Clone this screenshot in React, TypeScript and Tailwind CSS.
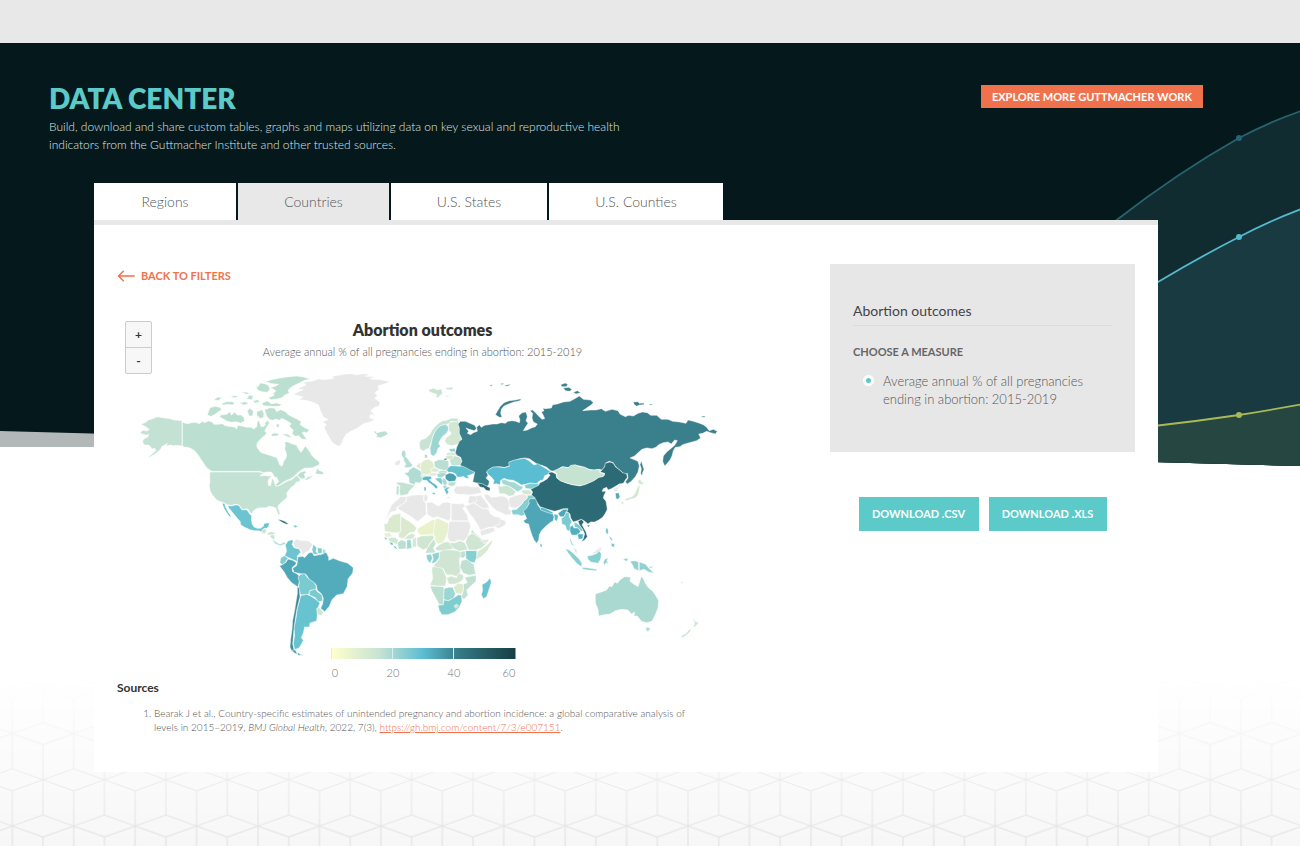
import React from "react";

type Shape = [fill: string, d: string];
type Region = { name: string; x: number; y: number; shapes: Shape[] };

const GREY = "#e8e8e8";
const CANADA = "#bbe0d1";
const RUSSIA = "#3a7f8c";
const CHINA = "#2c6b75";

const regions: Region[] = [
  {
    name: "north-america",
    x: 130,
    y: 365,
    shapes: [
      [CANADA, "M157,170 L163,174 173,176 185,173 196,172 208,176 219,168 222,173 236,168 246,171 252,178 264,178 278,176 283,181 294,184 305,185 316,187 319,193 324,181 338,184 350,187 364,187 370,192 380,186 382,170 386,166 390,176 394,186 402,184 410,172 413,182 408,190 404,198 410,204 404,212 398,216 390,224 382,233 380,244 386,254 392,262 404,266 416,270 428,274 440,278 444,286 448,298 454,304 459,300 460,290 466,282 470,272 468,262 464,252 466,242 464,232 472,230 480,234 490,238 500,240 503,248 508,256 513,262 518,256 522,248 527,243 533,252 540,262 546,272 554,280 562,286 568,292 568,299 558,304 548,308 536,309 522,310 510,318 500,326 492,334 500,332 512,322 524,318 530,322 522,328 527,338 518,342 508,338 502,330 490,336 480,342 470,346 460,352 448,360 440,364 436,358 438,344 434,336 428,326 420,322 412,322 402,324 394,320 384,319 246,319 240,316 234,311 228,305 224,300 218,290 212,282 206,272 200,264 192,256 182,250 172,247 163,246 157,243Z"],
      ["#c4e2d3", "M156,168 L146,166 132,165 120,161 108,160 98,158 86,156 78,157 66,162 56,164 50,170 42,174 34,178 44,184 52,188 58,194 50,198 40,196 30,202 36,207 48,210 56,208 54,216 44,220 38,228 40,236 46,240 56,240 62,246 66,252 74,250 78,256 70,264 60,272 52,280 64,274 74,268 84,260 92,252 96,244 104,240 112,235 108,244 120,240 130,242 142,241 156,243Z"],
      ["#c4e2d3", "M240,321 L384,321 394,322 402,326 396,330 390,333 400,332 410,329 418,331 424,336 416,342 414,352 416,362 422,362 424,350 426,342 434,342 438,346 434,354 436,362 442,364 452,360 462,354 474,347 486,344 496,334 502,332 508,340 512,346 506,350 498,352 494,360 484,366 480,372 474,378 470,386 472,396 464,404 454,412 446,420 444,428 448,438 450,448 446,450 442,442 438,430 430,426 418,424 408,428 398,428 386,429 376,433 368,440 367,448 360,442 354,432 346,432 338,434 328,420 316,418 304,421 292,419 280,413 272,410 262,406 254,398 246,388 240,376 238,362 240,350 239,336Z"],
      ["#6bc4cf", "M293,422 L305,423 316,420 326,421 336,435 346,434 352,436 358,446 365,452 364,464 366,476 372,486 382,490 392,490 400,484 402,476 410,474 418,474 416,484 410,490 402,490 400,496 394,500 386,497 374,497 360,494 344,487 332,479 331,470 322,460 314,450 304,438 296,428Z M276,414 L284,416 286,424 290,432 294,440 302,452 303,457 296,452 288,440 282,430Z"],
      ["#c9e4d2", "M396,494 L406,490 410,498 404,506 396,504Z M412,503 L424,500 436,503 432,509 420,510 412,508Z M418,512 L432,508 435,520 430,524Z"],
      ["#7fcdd1", "M427,524 L436,528 442,535 436,534Z M488,482 L498,480 503,485 496,488Z"],
      [CHINA, "M443,463 L454,465 464,469 476,477 470,478 460,474 450,468Z"],
      [CANADA, "M240,128 L256,124 272,128 274,136 262,142 256,148 242,154 232,150 236,138Z M274,150 L290,148 300,140 304,150 314,142 322,150 334,150 342,158 344,168 332,174 318,170 304,172 290,168 284,164 276,160 268,154Z M274,116 L290,110 306,110 314,114 308,120 294,118 280,120Z M250,106 L264,96 276,98 266,106Z M300,96 L312,92 326,94 316,98Z M334,80 L350,82 360,86 348,88Z M350,102 L358,90 370,94 366,104Z M328,114 L346,110 356,116 342,120Z"],
      [CANADA, "M378,60 L384,66 390,54 404,56 414,60 420,72 412,82 396,80 382,74Z M406,50 L424,44 446,40 470,36 500,33 520,36 540,42 524,46 512,52 500,58 484,66 474,76 478,84 464,90 456,98 440,102 424,104 414,98 432,92 430,84 438,78 430,72 420,68 436,64 446,58 426,56Z M396,114 L412,108 424,116 440,114 454,118 448,124 424,124 400,122Z M380,140 L396,134 402,146 400,158 390,160 380,150Z M352,138 L360,130 370,138 368,152 358,154Z M368,108 L384,104 390,110 376,114Z"],
      [CANADA, "M404,134 L420,128 434,130 440,140 452,134 466,140 476,150 488,156 500,162 514,170 510,178 524,188 538,194 530,204 522,200 516,204 524,214 530,224 516,222 506,212 496,214 486,206 490,196 478,184 484,176 468,166 456,160 448,166 436,162 430,166 420,164 410,154Z M422,210 L432,204 446,206 444,212 428,214Z M454,206 L474,208 486,218 474,216Z M440,176 L448,178 446,188 438,184Z M404,176 L412,166 418,174 412,184Z M556,326 L562,308 566,316 578,320 582,328 570,328Z M522,346 L534,336 550,331 540,340 530,345Z"],
      ["#ffffff", "M392,330 L408,321 424,321 430,330 416,333Z M430,340 L440,336 446,350 438,358 432,350Z"],
      [GREY, "M490,88 L506,80 520,74 502,72 528,60 520,52 548,48 566,42 584,44 612,40 606,34 644,28 668,26 676,30 700,26 720,28 706,34 736,36 720,42 752,44 780,50 760,58 744,62 746,74 734,84 742,92 734,100 750,112 748,122 732,128 722,138 736,152 722,148 718,158 734,164 722,170 700,176 684,188 664,198 648,208 640,222 632,240 626,244 612,236 602,226 596,214 588,200 582,184 590,180 578,170 594,164 580,156 570,134 566,120 550,112 528,106 506,104 520,96Z"],
      ["#bbe0d1", "M730,200 L738,198 740,204 752,200 766,198 774,206 766,212 752,218 738,216 742,210Z"],
    ],
  },
  {
    name: "europe",
    x: 380,
    y: 365,
    shapes: [
      ["#c9e4d2", "M146,74 L160,70 172,74 184,72 188,84 176,96 168,98 170,88 158,84 148,80Z M196,68 L220,66 216,74 202,74Z M198,90 L208,93 200,96Z"],
      ["#c7e3d3", "M118,232 L124,224 138,220 150,208 156,196 164,186 174,176 186,168 200,166 214,160 232,160 238,168 226,170 214,168 206,176 196,178 182,182 172,190 164,202 158,214 156,226 150,240 148,250 140,252 130,258 120,252Z"],
      ["#9bd6d3", "M182,182 L196,178 206,186 204,198 198,206 188,214 180,226 176,236 182,244 174,250 170,264 160,274 152,268 150,250 154,234 158,216 164,202 172,190Z"],
      ["#d3e8d2", "M206,176 L214,170 226,170 236,166 236,178 240,196 242,214 244,226 234,238 216,242 200,238 194,228 198,218 210,210 214,204 206,196Z"],
      ["#b4ddd3", "M66,258 L74,256 78,266 76,274 84,282 92,294 98,300 94,306 80,308 72,306 78,298 72,288 70,278 64,270Z"],
      [GREY, "M44,292 L58,284 62,290 58,300 46,302Z"],
      ["#b0dcd4", "M72,324 L84,322 88,314 100,306 112,312 126,320 128,334 126,348 118,354 106,352 104,360 88,354 86,336Z"],
      ["#c3e2d2", "M50,352 L66,352 84,356 104,361 98,368 88,378 84,388 72,390 62,392 58,384 60,362 50,358Z M50,362 L58,364 56,390 48,389Z"],
      ["#dcead0", "M108,304 L120,292 122,302 122,314Z M150,312 L164,308 180,316 168,322 156,320Z"],
      ["#dfedce", "M122,296 L132,286 144,282 158,290 162,300 162,308 152,312 156,322 148,328 134,330 124,326 122,310Z"],
      ["#a9d9d4", "M134,268 L142,270 142,279 134,279Z"],
      ["#b9dfd2", "M162,290 L176,284 192,284 206,288 206,304 204,316 190,316 176,312 164,306Z M172,320 L186,316 202,318 200,324 180,326Z"],
      [GREY, "M140,330 L154,324 170,322 170,332 154,334Z"],
      ["#e3efcc", "M122,330 L138,330 140,336 126,338Z"],
      ["#a9d9d4", "M170,326 L192,322 200,328 186,338 174,338Z"],
      ["#c6e3d2", "M214,300 L208,284 222,272 238,276 246,286 242,300 224,304Z"],
      ["#d3e8d2", "M196,272 L214,270 222,276 214,284 200,282Z M200,264 L214,262 226,264 230,272 214,270 198,272Z"],
      ["#8fd2d0", "M206,252 L226,250 226,260 212,260Z"],
      [RUSSIA, "M192,281 L200,279 200,285 192,285Z"],
      ["#62c1cf", "M206,306 L214,302 240,304 256,300 270,308 284,314 284,324 270,330 262,332 268,340 258,340 250,334 244,336 232,336 226,326 216,322 206,322 200,316Z"],
      ["#4a9fae", "M196,330 L208,324 220,326 230,336 226,348 208,350 196,342Z"],
      ["#bbe0d1", "M204,352 L226,350 228,358 218,364 206,362Z"],
      ["#a9d9d4", "M188,338 L198,344 202,358 192,362 186,348Z M188,362 L198,360 202,368 192,371Z"],
      ["#7ccbd0", "M164,340 L184,338 188,350 186,360 172,348Z"],
      ["#62c1cf", "M192,372 L204,366 212,368 202,373 206,382 200,390 196,380Z M202,396 L212,397 204,399Z"],
      ["#56b9cd", "M126,338 L138,334 152,334 156,340 148,344 156,352 166,358 174,366 168,372 160,362 148,354 140,346 128,346Z M154,383 L167,383 163,389Z M132,366 L138,366 138,378 133,378Z"],
      [GREY, "M222,372 L230,364 246,364 262,362 278,366 296,366 302,372 304,384 284,388 268,390 250,388 232,388 222,382Z"],
      ["#cce5d3", "M354,362 L366,364 380,360 394,368 408,380 402,390 388,394 374,386 358,386Z"],
      ["#a3d8d4", "M364,342 L376,344 390,350 404,352 416,360 430,366 424,374 412,380 398,370 384,362 368,358Z"],
    ],
  },
  {
    name: "asia",
    x: 440,
    y: 370,
    shapes: [
      [RUSSIA, "M62,154 L76,154 90,160 104,166 110,176 102,182 88,178 78,174 86,184 82,190 92,194 100,188 112,184 110,172 118,164 124,172 134,166 146,164 158,162 170,162 184,158 196,160 204,154 216,152 228,154 238,158 240,150 236,138 246,128 258,126 262,140 258,152 264,160 256,172 250,182 262,180 274,174 286,170 292,162 280,156 276,144 278,130 270,122 278,120 288,130 296,138 306,148 314,146 310,136 304,126 312,122 308,114 298,112 316,116 334,114 338,104 352,102 370,96 390,94 404,86 418,78 430,88 452,90 460,98 452,106 440,114 428,122 452,120 468,120 484,116 496,124 516,118 534,122 540,132 556,140 566,136 580,138 594,130 608,126 622,128 632,136 650,136 664,148 684,148 698,154 718,156 738,160 744,150 760,154 774,158 790,164 800,172 808,182 820,178 832,184 826,192 812,188 800,184 788,190 776,192 782,204 770,212 756,216 742,220 728,224 720,230 706,232 700,242 696,258 690,270 680,282 674,288 668,274 670,258 680,246 692,236 704,226 712,212 704,210 694,222 684,216 670,218 656,224 648,232 636,236 620,234 606,238 594,248 584,258 570,264 580,268 594,274 598,288 594,306 586,320 574,334 562,342 556,336 564,324 562,310 554,314 546,306 534,296 524,286 520,278 508,274 498,278 494,290 486,300 476,298 462,300 448,298 434,292 420,288 406,286 394,292 380,292 366,290 354,298 344,304 332,302 320,292 306,286 294,284 282,276 268,266 254,264 240,266 222,272 208,276 208,288 194,292 176,290 160,292 148,298 140,306 144,316 138,324 148,334 146,344 140,350 128,344 114,340 98,336 102,318 104,306 90,300 76,292 60,286 66,274 62,262 50,256 46,248 50,232 58,214 66,208 58,190 58,174 54,162Z"],
      [RUSSIA, "M166,134 L172,124 180,110 192,98 208,92 226,90 244,86 240,92 222,96 206,102 192,108 184,118 182,130 186,142 178,142Z M362,44 L376,39 384,44 378,50 366,50Z M370,54 L386,52 396,58 390,64 376,62Z M400,67 L412,62 422,68 408,72Z M148,46 L158,44 154,49Z M180,42 L192,39 188,44Z M192,47 L212,42 206,47 198,49Z M580,96 L594,95 598,100 612,99 612,104 598,105 590,109 582,103Z M626,102 L640,103 632,106Z M784,139 L796,138 794,142 786,142Z M604,272 L608,286 612,298 608,308 606,318 602,310 604,296 600,284Z"],
      [CHINA, "M112,339 L126,341 138,347 150,353 150,363 138,361 132,353 120,351Z"],
      ["#5bbdd1", "M140,305 L148,297 160,291 176,291 194,293 208,289 206,277 220,271 240,267 254,265 268,273 282,285 294,281 306,289 320,297 332,305 324,313 314,317 310,329 298,333 290,341 270,339 256,343 244,345 232,337 220,331 204,329 192,325 182,331 180,345 170,341 160,343 162,331 154,321 144,313Z"],
      ["#7ecdd2", "M254,345 L272,340 300,342 290,351 272,357 256,355Z"],
      ["#d3e8d2", "M244,361 L258,359 270,361 276,372 262,374 248,371Z"],
      [CHINA, "M272,358 L284,352 296,346 300,338 310,334 322,326 330,316 324,308 336,306 348,312 350,324 362,332 376,338 396,344 420,348 438,342 452,336 464,330 476,322 492,318 494,310 480,306 486,300 494,290 496,280 510,276 520,280 526,290 536,298 548,308 560,312 562,322 556,330 550,340 538,342 528,348 514,356 504,360 500,352 490,356 486,364 498,364 492,376 490,384 498,394 500,406 502,418 496,430 488,442 476,450 464,456 452,456 444,462 432,452 424,448 412,452 400,456 392,444 390,432 380,424 384,416 370,416 358,420 344,424 330,420 314,416 300,410 292,398 284,388 274,376 278,366Z M441,466 L450,466 446,472Z"],
      ["#c6e3d2", "M342,302 L356,296 370,290 384,294 392,286 406,284 418,290 434,292 448,300 464,300 478,298 480,308 494,312 488,320 476,322 462,332 448,338 434,344 418,346 398,344 378,338 360,332 352,324 350,312Z"],
      [GREY, "M520,356 L534,350 538,342 544,344 532,358 534,364 524,366Z M500,443 L498,451 495,447Z"],
      ["#4fa9b9", "M526,370 L536,368 540,380 534,388 528,386Z"],
      ["#d3e8d2", "M594,334 L600,328 606,336 614,338 604,344 596,341Z M600,346 L598,360 594,376 586,384 572,388 560,392 552,390 562,384 576,380 584,372 590,358 596,346Z M544,394 L552,396 548,404 544,400Z"],
      ["#86d0d1", "M214,420 L230,418 246,402 252,392 262,384 262,376 276,376 286,384 274,390 268,400 262,414 252,426 256,434 244,438 234,434 218,434Z"],
      [GREY, "M208,384 L222,378 238,374 252,372 262,378 260,386 250,394 244,404 228,414 210,412 206,398Z"],
      [GREY, "M132,372 L144,374 154,382 170,380 184,378 198,382 206,390 208,404 206,416 214,424 212,434 196,434 180,426 170,422 158,412 146,398 136,386Z"],
      [GREY, "M88,378 L108,378 122,376 134,390 144,404 148,414 132,416 116,408 104,398 90,402 84,396Z M106,378 L112,392 90,402"],
      [GREY, "M76,408 L88,404 100,398 112,406 128,416 146,418 150,430 164,440 176,442 184,448 178,462 162,470 148,472 134,476 122,482 112,462 100,444 88,430Z"],
      [GREY, "M120,484 L140,476 160,472 166,482 150,490 124,498Z M180,446 L198,454 196,464 176,476 168,472 162,470 178,462Z"],
      ["#4fa6b6", "M250,424 L260,414 268,400 266,392 272,386 286,386 290,394 294,406 302,416 318,424 338,430 342,440 340,452 330,458 316,470 304,482 298,494 296,510 290,520 282,510 276,496 270,478 266,462 256,460 250,452 260,446 256,436Z M354,430 L370,418 384,418 378,428 372,440 360,440Z"],
      ["#5ab9cb", "M300,412 L312,414 330,422 340,428 336,432 318,426 302,420Z M342,432 L354,434 354,444 350,454 344,450Z M300,520 L306,524 306,532 301,530Z"],
      ["#7acad1", "M364,446 L374,438 378,426 388,430 388,440 396,456 390,464 392,476 388,484 380,480 376,466 366,462Z"],
      ["#7acad1", "M402,456 L414,462 424,472 430,482 424,484 414,474 404,472Z"],
      ["#52b0c3", "M390,470 L398,466 402,474 414,474 422,484 414,494 402,496 394,494 390,484Z M412,492 L430,492 428,506 416,508Z M390,502 L394,514 400,526 404,530 396,524 391,514Z"],
      [CHINA, "M414,454 L424,448 432,456 426,464 438,486 442,500 434,510 424,516 430,506 434,492 428,478 418,464Z"],
      [GREY, "M400,532 L410,538 413,552 404,546Z"],
      ["#6bc4cf", "M498,474 L504,476 505,488 502,494 497,486Z M507,498 L515,504 518,512 512,510Z M514,520 L524,522 522,532 514,528Z"],
    ],
  },
  {
    name: "africa",
    x: 380,
    y: 480,
    shapes: [
      [GREY, "M34,76 L44,66 54,58 62,50 78,50 78,64 66,74 50,82 50,92 32,96 20,118 14,128 24,102Z"],
      [GREY, "M50,84 L66,74 80,64 78,50 98,46 120,44 132,46 130,60 138,72 138,90 140,102 122,118 112,124 94,110Z M132,44 L142,44 144,54 138,68 132,60Z"],
      [GREY, "M140,68 L154,66 164,72 176,78 188,68 202,66 212,70 212,114 206,122 172,110 160,114 142,104Z"],
      [GREY, "M214,70 L236,72 250,70 256,80 248,84 262,106 266,122 214,122Z"],
      [GREY, "M208,124 L268,124 272,140 268,156 262,170 252,184 236,180 222,186 208,184 202,170 204,146Z"],
      ["#dbeace", "M12,132 L22,130 26,116 40,104 62,100 62,150 60,158 40,158 14,154Z M62,108 L94,128 110,144 104,156 88,158 78,168 70,176 56,172 56,160 62,152Z"],
      ["#eaf2cc", "M112,146 L132,134 160,118 166,122 164,150 158,164 140,164 126,166 114,160Z"],
      ["#e6f1d0", "M166,120 L172,114 206,130 204,156 198,172 188,188 174,192 166,184 164,170 160,160Z"],
      ["#e6f1cd", "M12,160 L30,158 36,170 16,172Z"],
      ["#cfe6d2", "M24,174 L44,172 54,178 52,194 40,188 28,184Z"],
      ["#62c1cf", "M12,172 L22,174 18,180Z M28,186 L38,188 40,196 32,194Z M38,196 L48,200 54,209 44,204Z"],
      ["#bbe0d1", "M52,188 L64,180 78,184 78,206 56,208Z"],
      ["#a3d8d4", "M80,180 L92,178 96,204 80,208Z"],
      ["#d3e8d2", "M72,176 L84,166 96,160 106,166 98,176 80,178Z M98,178 L108,170 110,200 98,202Z"],
      ["#d0e6d2", "M110,174 L124,168 160,166 162,174 150,190 142,204 130,210 112,198Z"],
      ["#c6e3d2", "M140,208 L150,192 162,176 168,192 160,204 168,218 136,220Z"],
      ["#d0e6d2", "M164,206 L176,196 194,186 206,186 222,202 214,208 188,212 172,212Z"],
      ["#cfe6d2", "M208,188 L226,188 240,182 254,188 264,208 240,214 222,206 212,196Z"],
      ["#cfe6d2", "M256,186 L264,168 276,160 290,166 304,176 320,190 304,204 290,210 266,210Z M272,158 L276,148 284,158 300,172 296,174 282,162Z"],
      [GREY, "M300,179 L326,178 326,186 312,191Z"],
      ["#d9ead0", "M290,238 L292,214 306,206 322,194 338,178 336,188 322,212 304,230Z"],
      ["#86d0d1", "M256,212 L290,212 290,232 284,248 270,246 258,236Z"],
      ["#c0e1d2", "M240,216 L254,212 258,226 250,234 240,232Z"],
      ["#8fd2d0", "M138,226 L152,222 158,234 150,250 142,240Z M156,222 L178,216 178,232 168,246 154,252 160,236Z"],
      ["#d0e6d2", "M178,216 L190,210 214,210 236,212 244,222 238,236 240,262 242,274 232,290 214,284 198,284 190,266 170,264 160,258 170,246 178,236Z"],
      ["#c0e1d2", "M244,242 L260,238 282,254 284,270 288,282 268,286 250,280 240,262Z"],
      ["#cfe6d2", "M156,260 L176,262 188,266 196,284 200,296 196,318 170,318 150,316 158,296 156,276Z"],
      ["#cfe6d2", "M200,294 L214,288 230,294 236,280 250,284 250,298 240,306 226,312 206,312Z"],
      ["#c0e1d2", "M254,292 L288,286 288,304 270,320 260,330 264,346 252,358 244,352 250,330 250,312 262,308Z"],
      ["#dceacd", "M220,322 L234,310 250,312 250,330 244,342 228,340Z"],
      ["#9bd6d3", "M192,326 L206,322 218,322 226,340 222,354 204,362 190,358Z"],
      ["#bbe0d1", "M150,318 L190,320 192,326 190,374 178,374 166,352 156,334Z"],
      ["#7fcdd1", "M174,376 L190,374 192,360 206,362 224,352 236,344 244,346 246,364 238,382 224,396 204,404 186,404 178,392Z"],
      ["#d3e8d2", "M222,378 L230,372 236,378 228,386Z"],
      ["#6bc4cf", "M306,314 L320,306 330,294 334,306 328,326 320,350 310,356 304,344 308,330Z"],
    ],
  },
  {
    name: "south-america",
    x: 260,
    y: 515,
    shapes: [
      ["#9bd6d3", "M36,74 L48,82 60,88 74,81 76,87 60,92 46,86Z"],
      ["#6bc4cf", "M76,90 L84,78 96,74 100,78 96,88 102,98 118,102 122,112 112,122 112,140 100,134 86,128 74,122 80,108Z"],
      [GREY, "M100,84 L108,72 120,76 146,78 158,88 152,98 146,108 136,112 128,122 122,104 104,96Z"],
      ["#7fcdd1", "M160,88 L170,98 168,110 176,118 160,118 156,104Z M172,98 L186,100 186,114 174,116Z"],
      ["#a9d9d4", "M188,102 L196,104 196,116 188,116Z"],
      ["#7fcdd1", "M62,128 L74,122 84,130 76,142 66,150 60,142Z"],
      ["#4fa6b6", "M58,152 L66,150 78,142 84,132 98,136 108,142 108,148 96,158 98,170 110,176 118,184 118,200 114,216 96,204 82,188 72,170Z"],
      ["#53acbc", "M112,142 L114,126 128,124 134,128 146,114 156,112 162,122 186,118 198,112 206,126 206,136 220,130 240,138 262,144 280,158 278,174 264,192 262,214 250,236 230,240 216,254 208,274 194,290 182,280 188,266 190,250 184,236 172,226 168,208 150,196 138,178 122,176 102,172 98,160 110,152Z"],
      ["#7acad1", "M114,186 L122,178 134,176 144,190 162,202 168,212 168,224 150,226 146,238 122,240 116,220 118,200Z"],
      ["#7acad1", "M148,228 L166,222 172,230 186,240 188,258 174,260 166,248 148,240Z"],
      ["#68c3d0", "M122,242 L140,238 150,242 166,252 180,264 172,282 172,300 170,318 150,324 148,336 134,336 130,354 124,368 130,376 118,398 104,404 100,386 104,362 102,340 108,310 112,280 118,260Z"],
      ["#cfe6d2", "M170,280 L178,278 190,292 184,302 172,298Z"],
      ["#3f8b9a", "M112,216 L118,220 120,246 116,262 110,286 106,312 102,340 100,366 98,386 102,404 96,410 90,396 92,372 96,344 98,316 104,286 108,260 112,236Z"],
      ["#4fa6b6", "M96,406 L106,404 112,418 102,414Z M112,410 L120,418 132,421 114,421Z"],
    ],
  },
  {
    name: "oceania",
    x: 500,
    y: 480,
    shapes: [
      ["#86d0d1", "M196,206 L208,210 222,222 238,238 246,250 244,260 232,252 216,234 204,218Z M246,262 L266,264 290,268 290,272 262,270 248,267Z M262,228 L276,226 290,220 298,212 304,222 302,238 294,250 272,246 264,238Z M310,248 L314,238 326,234 320,242 326,252 318,248 314,256Z"],
      [GREY, "M274,224 L292,208 302,202 306,208 296,214 290,220Z"],
      ["#8fd2d0", "M369,238 L382,234 384,240 378,244Z M390,244 L404,242 416,246 416,272 402,266 398,256Z M418,246 L436,252 446,264 462,280 446,276 432,268 418,272Z M446,262 L460,258 454,265Z M543,304 L549,309 545,310Z"],
      ["#a9d9d0", "M286,342 L304,336 320,330 328,318 336,320 344,306 352,310 362,298 374,290 392,292 390,304 404,314 414,320 420,302 424,288 430,296 436,310 446,324 458,334 468,348 476,362 474,384 466,404 456,424 440,428 424,424 412,408 402,408 404,396 394,402 384,390 364,388 346,392 330,402 312,404 296,408 294,388 286,368Z M437,442 L451,444 446,454 440,454Z"],
      ["#cfe6d2", "M578,412 L586,424 596,428 586,440 580,442 584,430Z M574,444 L570,456 556,468 546,474 543,468 558,460 566,450Z"],
    ],
  },
];

const ticks = [
  { label: "0", x: 335 },
  { label: "20", x: 393 },
  { label: "40", x: 454 },
  { label: "60", x: 509 },
];

function WorldMap() {
  return (
    <svg viewBox="117 370 611 310" className="block w-full" role="img" aria-label="World map of abortion outcomes by country">
      <defs>
        <linearGradient id="scale">
          <stop offset="0" stopColor="#ffffcc" />
          <stop offset="0.26" stopColor="#c7e3d3" />
          <stop offset="0.5" stopColor="#5bbdd1" />
          <stop offset="0.7" stopColor="#347884" />
          <stop offset="1" stopColor="#173e45" />
        </linearGradient>
      </defs>
      {regions.map((region) => (
        <g key={region.name} transform={`translate(${region.x} ${region.y}) scale(0.33333)`} stroke="#ffffff" strokeWidth="1.4" strokeLinejoin="round">
          {region.shapes.map(([fill, d], i) => (
            <path key={i} fill={fill} d={d} />
          ))}
        </g>
      ))}
      <rect x="331.5" y="648" width="184" height="11" fill="url(#scale)" />
      <path d="M331.5 648v11M392.5 648v11M453.5 648v11" stroke="#e0eceb" strokeWidth="1" />
      {ticks.map((tick) => (
        <text key={tick.label} x={tick.x} y="677" textAnchor="middle" className="fill-[#777777] text-[11px] font-light">
          {tick.label}
        </text>
      ))}
    </svg>
  );
}

function HeroBackdrop() {
  return (
    <svg viewBox="0 43 1300 424" preserveAspectRatio="none" className="absolute inset-x-0 top-0 -z-10 h-[424px] w-full" aria-hidden="true">
      <defs>
        <clipPath id="hero">
          <path d="M0 43H1300V466L0 431Z" />
        </clipPath>
      </defs>
      <path d="M0 420H620V447H0Z" fill="#b2b8b8" />
      <g clipPath="url(#hero)" strokeWidth="1.8">
        <path d="M0 43H1300V470H0Z" fill="#05181b" />
        <path d="M1060 263L1116 220.5Q1177 173 1239 138Q1271 121 1304 110V480H1060Z" fill="#112c30" stroke="#276370" />
        <path d="M1100 317L1158 282Q1198 258 1239 237Q1269 221 1304 208V480H1100Z" fill="#193a40" stroke="#55b9cd" />
        <path d="M1100 430L1158 425.5Q1198 421 1239 415Q1270 410 1304 404V480H1100Z" fill="#264641" stroke="#a9b957" />
      </g>
      <circle cx="1239" cy="138" r="3" fill="#276370" />
      <circle cx="1239" cy="237" r="3" fill="#55b9cd" />
      <circle cx="1239" cy="415" r="3" fill="#a9b957" />
    </svg>
  );
}

function CubePattern() {
  return (
    <svg className="absolute inset-x-0 bottom-0 -z-10 h-[170px] w-full" aria-hidden="true">
      <defs>
        <pattern id="cubes" width="61.43" height="92.4" patternUnits="userSpaceOnUse" patternTransform="translate(12.3 46.4)">
          <path
            d="M0 11.2L30.7 0.2L61.43 11.2L30.7 22.2ZM0 11.2V46.4M61.43 11.2V46.4M30.7 22.2V57.4M0 46.4L30.7 57.4L61.43 46.4M0 68.4L30.7 57.4L61.43 68.4M30.7 57.4V92.4M0 68.4V92.4M61.43 68.4V92.4M0 0V11.2M61.43 0V11.2"
            fill="none"
            stroke="#e2e2e2"
            strokeWidth="1.2"
          />
        </pattern>
        <linearGradient id="fade" x1="0" y1="0" x2="0" y2="1">
          <stop offset="0" stopColor="#000" />
          <stop offset="1" stopColor="#fff" />
        </linearGradient>
        <mask id="fadeMask">
          <rect width="100%" height="100%" fill="url(#fade)" />
        </mask>
      </defs>
      <g mask="url(#fadeMask)">
        <rect width="100%" height="100%" fill="#f7f7f7" />
        <rect width="100%" height="100%" fill="url(#cubes)" />
      </g>
    </svg>
  );
}

const tabs = ["Regions", "Countries", "U.S. States", "U.S. Counties"];

export default function App() {
  return (
    <div className="relative isolate min-h-screen bg-white font-['Lato',sans-serif]">
      <div className="h-[43px] bg-[#e8e8e8]" />
      <div className="relative">
        <HeroBackdrop />
        <header className="flex items-start justify-between pt-[39px] pr-[97px] pl-[49px]">
          <div>
            <h1 className="text-[28px] leading-8 font-extrabold text-[#5bcac8]">DATA CENTER</h1>
            <p className="mt-1 max-w-[600px] text-xs leading-[18px] font-light text-[#dfe5e5]">
              Build, download and share custom tables, graphs and maps utilizing data on key sexual and reproductive health
              indicators from the Guttmacher Institute and other trusted sources.
            </p>
          </div>
          <a href="#work" className="mt-[3px] bg-[#f0724d] px-[11px] py-1 text-[11px] leading-[15px] font-bold text-white">
            EXPLORE MORE GUTTMACHER WORK
          </a>
        </header>

        <div className="mt-[29px] mr-[142px] ml-[94px]">
          <nav className="grid w-fit grid-cols-[142px_151px_156px_174px] gap-[2px]">
            {tabs.map((tab) => (
              <a
                key={tab}
                href={"#" + tab}
                aria-current={tab === "Countries" ? "page" : undefined}
                className="flex h-[37px] items-center justify-center bg-white text-sm font-light text-[#555555] aria-[current=page]:bg-[#e8e8e8]"
              >
                {tab}
              </a>
            ))}
          </nav>

          <main className="flex items-start gap-[102px] border-t-[5px] border-[#e8e8e8] bg-white px-[23px] pt-[39px] pb-[38px]">
            <div className="min-w-0 flex-1">
              <a href="#filters" className="flex h-6 w-fit items-center gap-[6px] text-[11px] font-bold text-[#f0724d]">
                <svg width="18" height="12" viewBox="0 0 18 12" fill="none" stroke="currentColor" strokeWidth="1.5" strokeLinecap="round" strokeLinejoin="round" aria-hidden="true">
                  <path d="M17.2 6H1.5M6.3 1.2L1.5 6L6.3 10.8" />
                </svg>
                BACK TO FILTERS
              </a>

              <figure className="relative mt-8">
                <div className="absolute top-px left-2 flex w-[27px] flex-col rounded-[2px] border border-[#cccccc] bg-[#f7f7f7] text-center text-xs font-bold text-[#333333]">
                  <button type="button" aria-label="Zoom in" className="h-[26px] border-b border-[#cccccc]">+</button>
                  <button type="button" aria-label="Zoom out" className="h-[25px]">-</button>
                </div>
                <figcaption className="text-center">
                  <h2 className="text-base leading-5 font-extrabold text-[#333333]">Abortion outcomes</h2>
                  <p className="mt-1 mb-[10px] text-[11px] leading-4 font-light text-[#555555]">
                    Average annual % of all pregnancies ending in abortion: 2015-2019
                  </p>
                </figcaption>
                <WorldMap />
              </figure>

              <h3 className="text-xs leading-4 font-bold text-[#333333]">Sources</h3>
              <ol className="mt-[10px] list-decimal pr-[30px] pl-[37px] text-[10px] leading-[14px] font-light text-[#555555]">
                <li>
                  Bearak J et al., Country-specific estimates of unintended pregnancy and abortion incidence: a global comparative analysis of
                  levels in 2015–2019, <em>BMJ Global Health</em>, 2022, 7(3),{" "}
                  <a href="https://gh.bmj.com/content/7/3/e007151" className="text-[#f0724d] underline">
                    https://gh.bmj.com/content/7/3/e007151
                  </a>
                  .
                </li>
              </ol>
            </div>

            <aside className="w-[305px] shrink-0">
              <form className="bg-[#e7e7e7] px-[23px] pt-[35px] pb-11">
                <h2 className="border-b border-[#dddddd] pb-[3px] text-sm leading-[23px] text-[#444444]">Abortion outcomes</h2>
                <fieldset className="mt-[18px]">
                  <legend className="text-[11px] leading-4 font-bold text-[#666666]">CHOOSE A MEASURE</legend>
                  <label className="mt-3 flex gap-[9px] pl-[10px] text-[13px] leading-[18px] font-light text-[#555555]">
                    <input
                      type="radio"
                      name="measure"
                      defaultChecked
                      className="mt-[3px] size-[11px] shrink-0 appearance-none rounded-full border-[3px] border-white bg-[#5bcac8]"
                    />
                    <span>Average annual % of all pregnancies ending in abortion: 2015-2019</span>
                  </label>
                </fieldset>
              </form>
              <div className="mt-[45px] flex justify-center gap-[10px] text-[11px] text-white">
                <button type="button" className="h-[34px] w-[120px] bg-[#5bcac8] font-bold">DOWNLOAD .CSV</button>
                <button type="button" className="h-[34px] w-[118px] bg-[#5bcac8] font-bold">DOWNLOAD .XLS</button>
              </div>
            </aside>
          </main>
        </div>
      </div>
      <div className="h-[74px]" />
      <CubePattern />
    </div>
  );
}
